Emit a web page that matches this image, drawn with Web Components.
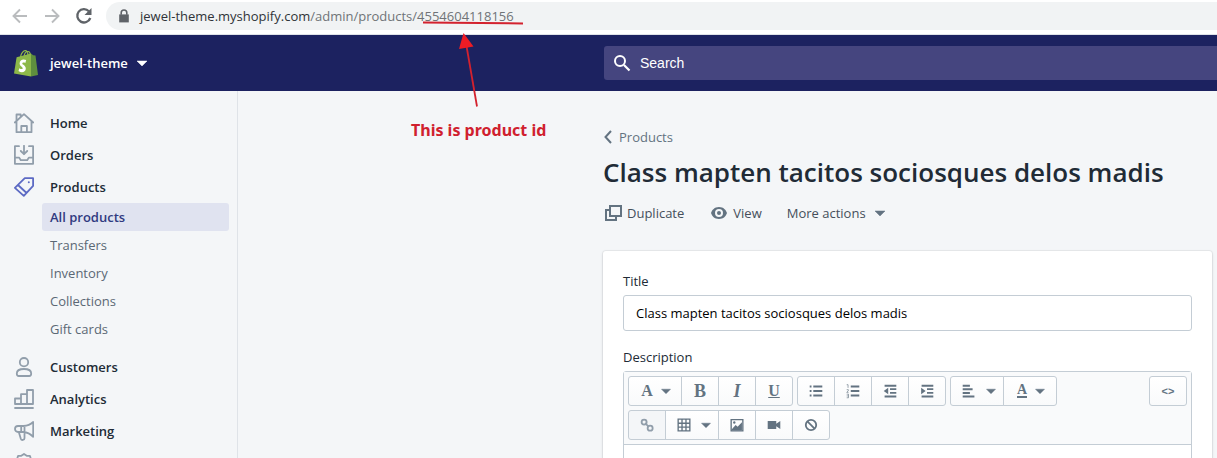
<!DOCTYPE html>
<html lang="en">
<head>
<meta charset="utf-8">
<title>jewel-theme ~ Products</title>
<style>
html, body { margin: 0; height: 100%; }
body { overflow: hidden; background: #f4f6f8; color: #212b36; font: 400 13px/20px "Open Sans", "Noto Sans", sans-serif; }
</style>
</head>
<body>
<admin-app></admin-app>
<script>
const define = (name, html, setup) => customElements.define(name, class extends HTMLElement {
  constructor() {
    super();
    const t = document.createElement('template');
    t.innerHTML = html;
    this.attachShadow({ mode: 'open' }).append(t.content.cloneNode(true));
  }
  connectedCallback() { if (setup) setup(this, this.shadowRoot); }
});

const line = 'fill="none" stroke="currentColor" stroke-width="1.8" stroke-linejoin="round" stroke-linecap="round"';
const ICONS = {
  back: '<path d="M17 10H4M10 3.5 3.5 10l6.5 6.5" fill="none" stroke="currentColor" stroke-width="1.9"/>',
  forward: '<path d="M3 10h13M10 3.5l6.500 6.500-6.500 6.500" fill="none" stroke="currentColor" stroke-width="1.9"/>',
  reload: '<path d="M16.300 12a6.700 6.700 0 1 1-1.400-6.800" fill="none" stroke="currentColor" stroke-width="2.300"/><path d="M17.500 2v7h-7z" fill="currentColor"/>',
  lock: '<path d="M4 8h12v10H4z" fill="currentColor"/><path d="M6.500 8.500V6a3.500 3.500 0 0 1 7 0v2.500" fill="none" stroke="currentColor" stroke-width="2"/>',
  caret: '<path d="M5 8h10l-5 5z" fill="currentColor" stroke="currentColor" stroke-width=".5" stroke-linejoin="round"/>',
  search: '<circle cx="8" cy="8" r="5" fill="none" stroke="currentColor" stroke-width="2"/><path d="m12 12 5.500 5.500" stroke="currentColor" stroke-width="2.200"/>',
  home: `<path d="M.8 9.500 10 1.200l9.200 8.300M2.500 9V1.500h4.200v2.300M2.500 8.500v10.700h4.800v-6.200h5.600v6.200h4.600V8.500M7.300 19.200h5.600" ${line}/>`,
  orders: `<path d="M5 1.200H.9v17.600h18.200V1.200H15M1 12.600h4.200l1.600 2.600h6.400l1.600-2.600H19M10 .8v8.400M6.800 6l3.200 3.200L13.200 6" ${line}/>`,
  products: `<path d="M10.800 1.200h8.300v7.600L9.800 18.900.9 10.800zM4 8l8.600 8" ${line}/><circle cx="14.800" cy="5.300" r="1" fill="currentColor"/>`,
  customers: `<circle cx="10" cy="5.200" r="4.200" ${line}/><path d="M2.800 16.500c0-3 3.200-4.500 7.200-4.500s7.200 1.500 7.200 4.500c0 1.800-.7 2.500-2 2.500H4.800c-1.300 0-2-.7-2-2.500z" ${line}/>`,
  analytics: `<path d="M1 15V9.500h6V15zM7 15V5.200h6V15zM13 15V1h6v14zM1 19h18" ${line}/>`,
  marketing: `<path d="M19.200 1v14.800C16 12.500 13 11.200 9.500 11H4a3 3 0 0 1 0-6h5.500C13 4.800 16 4 19.200 1zM10.500 5v12.200c0 2-3 2.500-3.700.5L4.800 11M7.200 5v6" ${line}/>`,
  discounts: `<path d="m10 .9 2.700 1.900h3.200l1 3.200 2.200 2.500-1.300 3 .2 3.300-3.200 1.200-1.700 2.800L10 18l-3.100.8-1.700-2.800L2 14.800l.2-3.300-1.300-3L3.100 6l1-3.200h3.200z" ${line}/>`,
  chevron: '<path d="m12 4-5.500 6 5.500 6" fill="none" stroke="currentColor" stroke-width="2"/>',
  duplicate: '<path d="M7 3h11v10H7zM7 7H3v10h10v-4" fill="none" stroke="currentColor" stroke-width="2"/>',
  view: '<path d="M10 4C5.500 4 3 7 2 10c1 3 3.500 6 8 6s7-3 8-6c-1-3-3.500-6-8-6zm0 10a4 4 0 1 1 0-8 4 4 0 0 1 0 8z" fill="currentColor"/><circle cx="10" cy="10" r="2" fill="currentColor"/>',
  bullets: '<path d="M7 4h10v2.200H7zM7 9h10v2.200H7zM7 14h10v2.200H7zM3 4h2v2.200H3zM3 9h2v2.200H3zM3 14h2v2.200H3z" fill="currentColor"/>',
  numbers: '<path d="M7.500 4H17v2.200H7.500zM7.500 9H17v2.200H7.500zM7.500 14H17v2.200H7.500z" fill="currentColor"/><path d="M3 3h1.500v3.500M3 8.500h1.800v1.300L3 11.500h2M3 13.500h2v4H3m0-2h1.800" fill="none" stroke="currentColor" stroke-width=".7"/>',
  outdent: '<path d="M4 3h13v2.200H4zM10 7h7v2H10zM10 11h7v2H10zM4 15h13v2.200H4zM8 6.500v7L3 10z" fill="currentColor"/>',
  indent: '<path d="M4 3h13v2.200H4zM10 7h7v2H10zM10 11h7v2H10zM4 15h13v2.200H4zM3.500 6.500v7l5-3.500z" fill="currentColor"/>',
  align: '<path d="M3 3h8v2.200H3zM3 7h11v2.200H3zM3 11h8v2.200H3zM3 15h13v2.200H3z" fill="currentColor"/>',
  link: '<circle cx="6.800" cy="6.800" r="2.800" fill="none" stroke="currentColor" stroke-width="2"/><circle cx="13.500" cy="13.500" r="2.800" fill="none" stroke="currentColor" stroke-width="2"/><path d="m8 8 4 4" stroke="currentColor" stroke-width="2"/>',
  table: '<path d="M3.500 3.500h13v13h-13zM3.500 8h13M3.500 12.300h13M7.800 3.500v13M12.200 3.500v13" fill="none" stroke="currentColor" stroke-width="1.500"/>',
  image: '<path d="M3.500 4h13v12.500h-13z" fill="none" stroke="currentColor" stroke-width="1.500"/><path d="m4 15 4.500-5 2.200 2L15.500 7v9H4z" fill="currentColor"/><circle cx="7" cy="7.200" r="1.300" fill="currentColor"/>',
  video: '<path d="M3 5.500h9.500v3.200L17 5.500v9l-4.500-3.200v3.200H3z" fill="currentColor"/>',
  clear: '<circle cx="10" cy="10" r="5.800" fill="none" stroke="currentColor" stroke-width="2"/><path d="m6 6 8 8" stroke="currentColor" stroke-width="2"/>'
};
define('ui-icon', `<style>:host{display:block;flex:none;width:20px;height:20px}svg{display:block;width:100%;height:100%}</style><svg viewBox="0 0 20 20" aria-hidden="true"></svg>`,
  (el, root) => { root.querySelector('svg').innerHTML = ICONS[el.getAttribute('name')] || ''; });

define('shop-logo', `<style>:host{display:block;flex:none;width:24px;height:28px}svg{display:block}</style>
<svg width="24" height="28" viewBox="0 0 24 28" aria-hidden="true">
<path d="M6.500 8C7 4 9.500 1.500 11.500 1.700c2 .2 2.500 3 2.500 5.300M10 8c.3-3.500 2-5.500 4-5.500 1.500 0 2.300 2 2.300 4" fill="none" stroke="#95bf47" stroke-width="1.200"/>
<path d="M2.600 8.300 17 4.600v22.900L0 24.600z" fill="#8db849"/><path d="m17 4.600 2.200 1.600 2.300.3L24 26l-7 1.500z" fill="#5e8e3e"/>
<path d="m12.200 11-.9 3c-1-.5-3-.7-3 .5 0 1.300 3.700 1.800 3.500 5.200-.2 3.300-4 4.600-7.300 2.300l.8-2.800c1.200 1 3.400 1.400 3.400.1 0-1.500-3.200-2-3.100-5 .1-3.300 3.300-4.800 6.600-3.300z" fill="#fff"/></svg>`);

define('browser-bar', `<style>
:host{display:flex;align-items:center;height:35px;background:#fff;box-sizing:border-box;border-bottom:1px solid #dfe3e8;padding-bottom:2px}
nav{display:flex;gap:12px;padding-left:10px;width:96px;box-sizing:border-box}
button{border:0;background:none;padding:0;width:20px;height:20px;color:#5f6368}
button:disabled{color:#babcbe}
.address{flex:1;display:flex;align-items:center;gap:8px;height:28px;margin-left:10px;padding-left:10px;background:#f1f3f4;border-radius:14px 0 0 14px;color:#5f6368}
.address ui-icon{width:16px;height:16px}
.url{color:#6f7377;white-space:nowrap}
.host{color:#303338}
</style>
<nav aria-label="Browser"><button disabled aria-label="Back"><ui-icon name="back"></ui-icon></button><button disabled aria-label="Forward"><ui-icon name="forward"></ui-icon></button><button aria-label="Reload"><ui-icon name="reload"></ui-icon></button></nav>
<div class="address"><ui-icon name="lock"></ui-icon><div class="url" role="textbox" aria-label="Address"><span class="host">jewel-theme.myshopify.com</span>/admin/products/4554604118156</div></div>`);

define('top-bar', `<style>
:host{display:grid;grid-template-columns:604px 1fr;align-items:center;height:56px;background:#1c2260;color:#fff}
.shop{display:flex;align-items:center;gap:12px;justify-self:start;margin-left:14px;border:0;background:none;padding:0;color:inherit;font:600 13px/20px "Open Sans",sans-serif}
.shop ui-icon{margin-left:-8px}
label{display:flex;align-items:center;height:34px;padding-left:8px;gap:8px;background:#45457f;border-radius:3px 0 0 3px}
input{flex:1;min-width:0;border:0;outline:0;padding:0;background:none;color:#fff;font:14px/20px "Liberation Sans",Arial,sans-serif}
input::placeholder{color:#fff;opacity:1}
</style>
<button class="shop"><shop-logo></shop-logo><span>jewel-theme</span><ui-icon name="caret"></ui-icon></button>
<label><ui-icon name="search"></ui-icon><input type="search" placeholder="Search" aria-label="Search"></label>`);

define('nav-item', `<style>
:host{display:block}
a{display:flex;align-items:center;gap:16px;height:32px;padding-left:14px;color:#212b36;font-weight:600;text-decoration:none}
ui-icon{color:#919eab}
:host([active]) ui-icon{color:#5c6ac4}
:host([active]){padding-bottom:8px}
</style><a href="#"><ui-icon></ui-icon><span></span></a><slot></slot>`,
  (el, root) => {
    root.querySelector('ui-icon').replaceWith(Object.assign(document.createElement('template'), { innerHTML: `<ui-icon name="${el.getAttribute('icon')}"></ui-icon>` }).content);
    root.querySelector('span').textContent = el.getAttribute('label');
  });
define('sub-item', `<style>
:host{display:block;margin:0 8px 0 42px}
a{display:block;padding:4px 8px;border-radius:3px;color:#5b6875;text-decoration:none}
:host([selected]) a{background:#e0e3f0;color:#303a80;font-weight:600}
</style><a href="#"><slot></slot></a>`);
define('side-nav', `<style>:host{display:block;box-sizing:border-box;border-right:1px solid #dfe3e8;padding-top:16px}</style>
<nav aria-label="Main">
<nav-item icon="home" label="Home"></nav-item>
<nav-item icon="orders" label="Orders"></nav-item>
<nav-item icon="products" label="Products" active><sub-item selected>All products</sub-item><sub-item>Transfers</sub-item><sub-item>Inventory</sub-item><sub-item>Collections</sub-item><sub-item>Gift cards</sub-item></nav-item>
<nav-item icon="customers" label="Customers"></nav-item>
<nav-item icon="analytics" label="Analytics"></nav-item>
<nav-item icon="marketing" label="Marketing"></nav-item>
<nav-item icon="discounts" label=""></nav-item>
</nav>`);

define('tool-group', `<style>:host{display:flex}::slotted(:first-child){--r1:3px;--ml:0}::slotted(:last-child){--r2:3px}</style><slot></slot>`);
define('tool-button', `<style>
:host{display:block;margin-left:var(--ml,-1px)}
button{display:flex;align-items:center;justify-content:center;box-sizing:border-box;width:38px;height:30px;padding:0;border:1px solid #c4cdd5;border-radius:var(--r1,0) var(--r2,0) var(--r2,0) var(--r1,0);background:linear-gradient(#fff,#f9fafb);color:#637381;font:700 18px/20px "Liberation Serif",serif}
:host([menu]) button{width:54px;gap:4px;padding-left:6px}
button:disabled{background:#f4f6f8;color:#919eab}
ui-icon{width:18px;height:18px}
:host(:not([menu])) .caret{display:none}
::slotted(ui-icon){width:18px;height:18px}
</style><button><slot></slot><ui-icon class="caret" name="caret"></ui-icon></button>`,
  (el, root) => { const b = root.querySelector('button'); b.setAttribute('aria-label', el.getAttribute('label')); b.disabled = el.hasAttribute('off'); });

define('rich-editor', `<style>
:host{display:block;border:1px solid #c4cdd5;border-radius:3px 3px 0 0;background:#fff}
.bar{display:flex;align-items:start;justify-content:space-between;padding:4px;background:#f9fafb;border-bottom:1px solid #c4cdd5}
.tools{display:flex;flex-wrap:wrap;gap:4px;max-width:440px}
.i{font-style:italic}
.u{text-decoration:underline}
.small,.u{font-size:16px}
.color{font-size:14px;line-height:12px;border-bottom:2px solid}
.code{font:700 11px/20px "Liberation Sans",sans-serif}
.text{height:120px}
</style>
<div class="bar" role="toolbar" aria-label="Formatting"><div class="tools">
<tool-group><tool-button menu label="Formatting"><span class="small">A</span></tool-button><tool-button label="Bold"><span>B</span></tool-button><tool-button label="Italic"><span class="i">I</span></tool-button><tool-button label="Underline"><span class="u">U</span></tool-button></tool-group>
<tool-group><tool-button label="Bulleted list"><ui-icon name="bullets"></ui-icon></tool-button><tool-button label="Numbered list"><ui-icon name="numbers"></ui-icon></tool-button><tool-button label="Outdent"><ui-icon name="outdent"></ui-icon></tool-button><tool-button label="Indent"><ui-icon name="indent"></ui-icon></tool-button></tool-group>
<tool-group><tool-button menu label="Alignment"><ui-icon name="align"></ui-icon></tool-button><tool-button menu label="Color"><span class="color">A</span></tool-button></tool-group>
<tool-group><tool-button off label="Insert link"><ui-icon name="link"></ui-icon></tool-button><tool-button menu label="Insert table"><ui-icon name="table"></ui-icon></tool-button><tool-button label="Insert image"><ui-icon name="image"></ui-icon></tool-button><tool-button label="Insert video"><ui-icon name="video"></ui-icon></tool-button><tool-button label="Clear formatting"><ui-icon name="clear"></ui-icon></tool-button></tool-group>
</div><tool-group><tool-button label="Show HTML"><span class="code">&lt;&gt;</span></tool-button></tool-group></div>
<div class="text" contenteditable role="textbox" aria-label="Description"></div>`);

define('product-card', `<style>
:host{display:block;padding:20px;background:#fff;border-radius:3px;box-shadow:0 0 0 1px rgba(63,63,68,.06),0 1px 3px rgba(63,63,68,.18)}
label,.label{display:block;margin-bottom:4px}
input{display:block;box-sizing:border-box;width:100%;height:36px;margin-bottom:16px;padding:0 12px;border:1px solid #c4cdd5;border-radius:3px;background:#fff;color:#000;font:inherit}
</style>
<label for="t">Title</label><input id="t" type="text" value="Class mapten tacitos sociosques delos madis">
<div class="label">Description</div><rich-editor></rich-editor>`);

define('product-page', `<style>
:host{display:block;min-width:0;padding:36px 5px 0 365px}
.crumb{display:flex;align-items:center;color:#637381;text-decoration:none;width:max-content;margin-left:-4px}
h1{margin:7px 0 13px;font-size:26px;line-height:36px;font-weight:600;white-space:nowrap}
.actions{display:flex;gap:25px;margin:0 0 28px}
button{display:flex;align-items:center;gap:4px;border:0;padding:0;background:none;color:#454f5b;font:inherit}
ui-icon{color:#637381}
</style>
<a class="crumb" href="#"><ui-icon name="chevron"></ui-icon>Products</a>
<h1>Class mapten tacitos sociosques delos madis</h1>
<div class="actions"><button><ui-icon name="duplicate"></ui-icon>Duplicate</button><button><ui-icon name="view"></ui-icon>View</button><button>More actions<ui-icon name="caret"></ui-icon></button></div>
<product-card></product-card>`);

define('id-callout', `<style>
:host{position:absolute;left:408px;top:16px;width:150px;pointer-events:none;color:#d0202e;text-align:left}
svg{display:block}
p{margin:0;padding-left:3px;font:700 16px/20px "Noto Sans","Open Sans",sans-serif;white-space:nowrap}
</style><svg width="150" height="104" viewBox="0 0 150 104" aria-hidden="true"><path d="M15 6.500c30 .5 65 .5 100 1" stroke="#d3222e" stroke-width="2" fill="none"/><path d="M58.500 30 69 90.500" stroke="#d3222e" stroke-width="1.800"/><path d="M55.500 17 65.500 30.500 51 33z" fill="#ed1c24"/></svg><p>This is product id</p>`);

define('admin-app', `<style>
:host{display:flex;flex-direction:column;height:100vh;overflow:hidden;position:relative}
.body{flex:1;display:grid;grid-template-columns:238px 1fr;min-height:0}
</style><browser-bar></browser-bar><top-bar></top-bar><div class="body"><side-nav></side-nav><product-page></product-page></div><id-callout></id-callout>`);
</script>
</body>
</html>
